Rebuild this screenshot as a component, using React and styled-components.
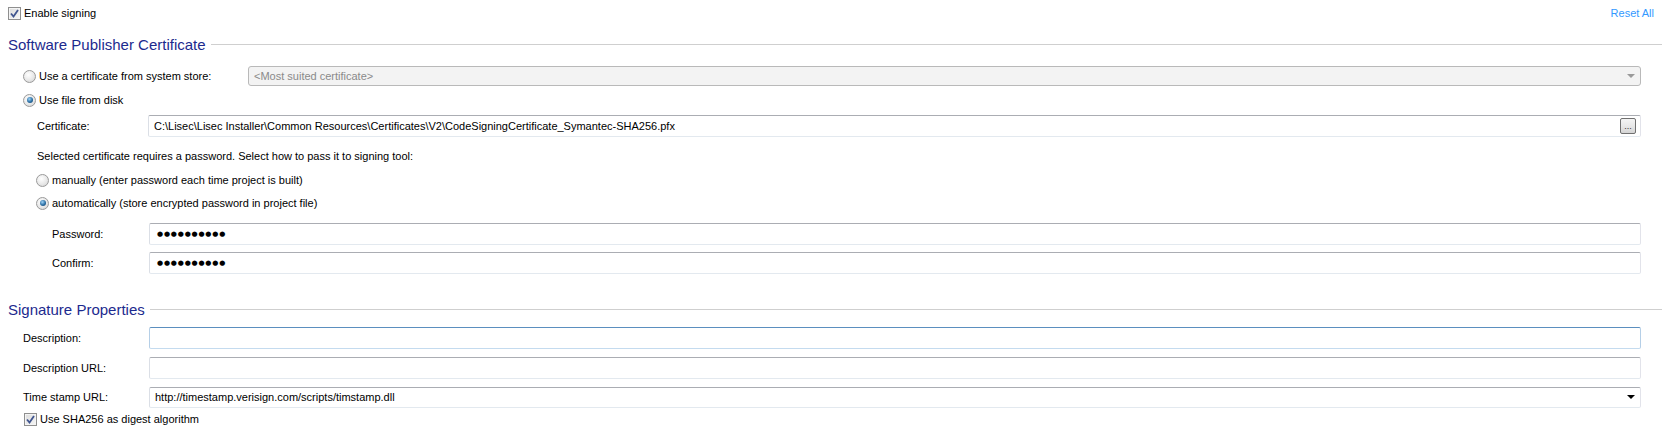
import React from "react";
import styled, { createGlobalStyle } from "styled-components";

const Global = createGlobalStyle`
    html, body { margin:0; padding:0; background:#ffffff; }
    body { font-family: "Liberation Sans", Arial, sans-serif; font-size:11px; color:#000; }
`;

const Page = styled.div`
    width:1662px;
    height:437px;
    display:flex;
    flex-direction:column;
    overflow:hidden;
`;

const TopRow = styled.div`
    height:26px;
    padding:0 8px;
    display:flex;
    align-items:center;
    justify-content:space-between;
`;

const ResetLink = styled.span`
    color:#3399ff;
    cursor:pointer;
`;

const SectionHeader = styled.div`
    height:20px;
    margin-top:${p => p.$top}px;
    padding-left:8px;
    display:flex;
    align-items:center;
    gap:5px;
    font-size:15px;
    color:#1c2a8e;
    &::after {
        content:"";
        flex:1;
        height:1px;
        background:#cfcfcf;
        margin-top:1px;
    }
`;

const Row = styled.div`
    height:${p => p.$h || 20}px;
    margin-top:${p => p.$top}px;
    padding-left:${p => p.$indent}px;
    padding-right:21px;
    display:flex;
    align-items:center;
`;

const FieldRow = styled.div`
    height:22px;
    margin-top:${p => p.$top}px;
    padding-left:${p => p.$indent}px;
    padding-right:21px;
    display:grid;
    grid-template-columns:${p => p.$label}px 1fr;
    align-items:center;
`;

const Option = styled.label`
    display:flex;
    align-items:center;
    gap:3px;
    white-space:nowrap;
    width:${p => (p.$w ? p.$w + "px" : "auto")};
`;

const Box = styled.span`
    width:11px;
    height:11px;
    border:1px solid #8f8f8f;
    background:linear-gradient(135deg, #dcdcdc 0%, #f6f6f6 100%);
    box-shadow: inset 0 0 0 1px #f4f4f4;
    display:flex;
    align-items:center;
    justify-content:center;
`;

const Radio = styled.span`
    width:11px;
    height:11px;
    border-radius:50%;
    border:1px solid #9a9a9a;
    background:radial-gradient(circle at 40% 35%, #ffffff 0%, #e8e8e8 55%, #cfcfcf 100%);
    display:flex;
    align-items:center;
    justify-content:center;
    &::after {
        content:"";
        display:${p => (p.$on ? "block" : "none")};
        width:6px;
        height:6px;
        border-radius:50%;
        background:radial-gradient(circle at 40% 35%, #9fd3f7 0%, #2a6ea3 55%, #123e66 100%);
    }
`;

const Field = styled.div`
    height:22px;
    box-sizing:border-box;
    border:1px solid;
    border-color:${p => (p.$focus ? "#5b8fbf #b5cfe7 #c4dbef #b5cfe7" : "#abadb3 #e2e3ea #e3e9ef #dbdfe6")};
    border-radius:2px;
    background:#fff;
    display:flex;
    align-items:center;
    padding:0 3px 0 5px;
`;

const Combo = styled(Field)`
    height:${p => p.$h || 21}px;
    background:${p => (p.$disabled ? "#f3f3f3" : "#fff")};
    border-color:${p => (p.$disabled ? "#b9b9b9" : "#abadb3 #e2e3ea #e3e9ef #dbdfe6")};
    border-radius:${p => (p.$disabled ? 3 : 2)}px;
    color:${p => (p.$disabled ? "#8a8a8a" : "#000")};
    flex:1;
    padding-right:5px;
`;

const Grow = styled.span`
    flex:1;
    white-space:nowrap;
    overflow:hidden;
`;

const Arrow = styled.span`
    width:0;
    height:0;
    border-left:4px solid transparent;
    border-right:4px solid transparent;
    border-top:4px solid ${p => p.$color};
`;

const Browse = styled.span`
    width:16px;
    height:16px;
    box-sizing:border-box;
    border:1px solid #707070;
    border-radius:2px;
    background:linear-gradient(#f4f4f4 0%, #e8e8e8 50%, #d4d4d4 100%);
    font-size:9px;
    line-height:14px;
    text-align:center;
    color:#333;
    margin-right:1px;
`;

const Dots = styled.span`
    font-family:"DejaVu Sans", sans-serif;
    font-size:7px;
    letter-spacing:0.8px;
    padding-left:2px;
`;

const Check = () => (
    <svg width="9" height="9" viewBox="0 0 9 9">
        <path d="M1 4.5 L3.5 7.5 L8 1" fill="none" stroke="#40558f" strokeWidth="1.8" />
    </svg>
);

export default function App() {
    return (
        <Page>
            <Global />
            <TopRow>
                <Option><Box><Check /></Box>Enable signing</Option>
                <ResetLink>Reset All</ResetLink>
            </TopRow>

            <SectionHeader $top={8}>Software Publisher Certificate</SectionHeader>

            <Row $top={12} $indent={23}>
                <Option $w={225}><Radio />Use a certificate from system store:</Option>
                <Combo $disabled $h={20}>
                    <Grow>&lt;Most suited certificate&gt;</Grow>
                    <Arrow $color="#9a9a9a" />
                </Combo>
            </Row>
            <Row $top={4} $indent={23}>
                <Option><Radio $on />Use file from disk</Option>
            </Row>
            <FieldRow $top={5} $indent={37} $label={111}>
                <span>Certificate:</span>
                <Field>
                    <Grow>C:\Lisec\Lisec Installer\Common Resources\Certificates\V2\CodeSigningCertificate_Symantec-SHA256.pfx</Grow>
                    <Browse>...</Browse>
                </Field>
            </FieldRow>

            <Row $top={9} $indent={37}>
                Selected certificate requires a password. Select how to pass it to signing tool:
            </Row>
            <Row $top={4} $indent={36}>
                <Option><Radio />manually (enter password each time project is built)</Option>
            </Row>
            <Row $top={3} $indent={36}>
                <Option><Radio $on />automatically (store encrypted password in project file)</Option>
            </Row>
            <FieldRow $top={10} $indent={52} $label={97}>
                <span>Password:</span>
                <Field><Dots>●●●●●●●●●●</Dots></Field>
            </FieldRow>
            <FieldRow $top={7} $indent={52} $label={97}>
                <span>Confirm:</span>
                <Field><Dots>●●●●●●●●●●</Dots></Field>
            </FieldRow>

            <SectionHeader $top={25}>Signature Properties</SectionHeader>

            <FieldRow $top={8} $indent={23} $label={126}>
                <span>Description:</span>
                <Field $focus />
            </FieldRow>
            <FieldRow $top={8} $indent={23} $label={126}>
                <span>Description URL:</span>
                <Field />
            </FieldRow>
            <FieldRow $top={7} $indent={23} $label={126}>
                <span>Time stamp URL:</span>
                <Combo>
                    <Grow>http://timestamp.verisign.com/scripts/timstamp.dll</Grow>
                    <Arrow $color="#000" />
                </Combo>
            </FieldRow>
            <Row $top={2} $h={18} $indent={24}>
                <Option><Box><Check /></Box>Use SHA256 as digest algorithm</Option>
            </Row>
        </Page>
    );
}
